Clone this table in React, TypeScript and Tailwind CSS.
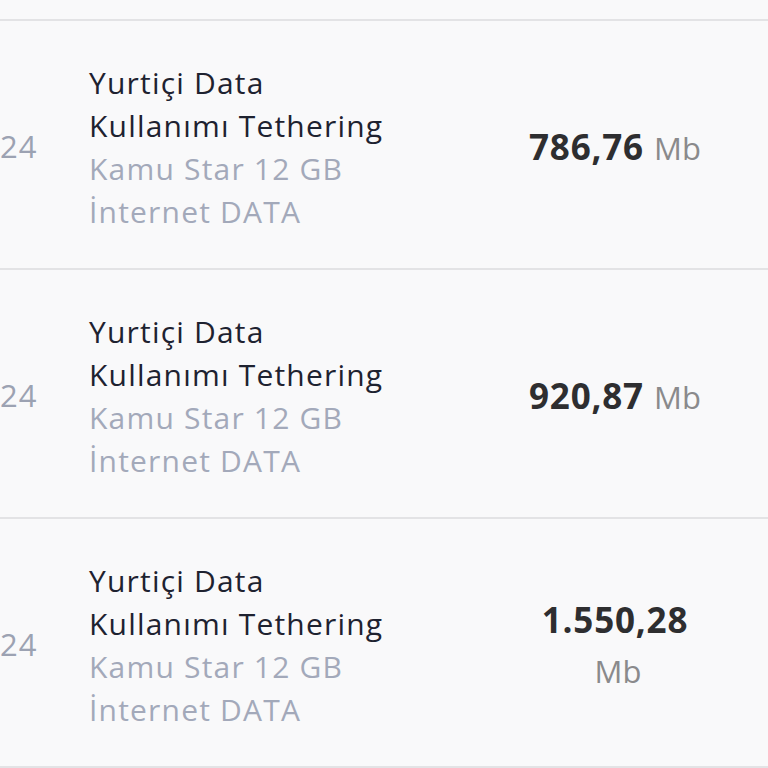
const rows = [
  { value: "786,76" },
  { value: "920,87" },
  { value: "1.550,28" },
];

function UsageRow({ value }: { value: string }) {
  return (
    <div className="flex items-center h-[249px] border-b-2 border-[#e3e3e5]">
      <div className="w-[37px] shrink-0 text-right text-[31px] tracking-[1px] text-[#9ca2b2] leading-none mt-[4px]">
        24
      </div>
      <div className="ml-[52px] w-[340px] shrink-0 text-[30px] leading-[43px] tracking-[1.2px] mt-[4px]">
        <div className="text-[#1e2230]">Yurtiçi Data</div>
        <div className="text-[#1e2230]">Kullanımı Tethering</div>
        <div className="text-[#a3a9ba]">Kamu Star 12 GB</div>
        <div className="text-[#a3a9ba]">İnternet DATA</div>
      </div>
      <div className="ml-auto mr-[57px] w-[192px] text-center leading-[44px] mt-[12px]">
        <span className="text-[35px] font-bold text-[#2e2e30] tracking-[0.8px]">{value}</span>{" "}
        <span className="ml-[6px] text-[31px] text-[#8a8a8c]">Mb</span>
      </div>
    </div>
  );
}

export default function App() {
  return (
    <div className="w-[768px] h-[768px] overflow-hidden bg-[#f9f9fa] font-['Open_Sans',sans-serif]">
      <div className="h-[21px] border-b-2 border-[#e3e3e5]" />
      {rows.map((r, i) => (
        <UsageRow key={i} value={r.value} />
      ))}
    </div>
  );
}
